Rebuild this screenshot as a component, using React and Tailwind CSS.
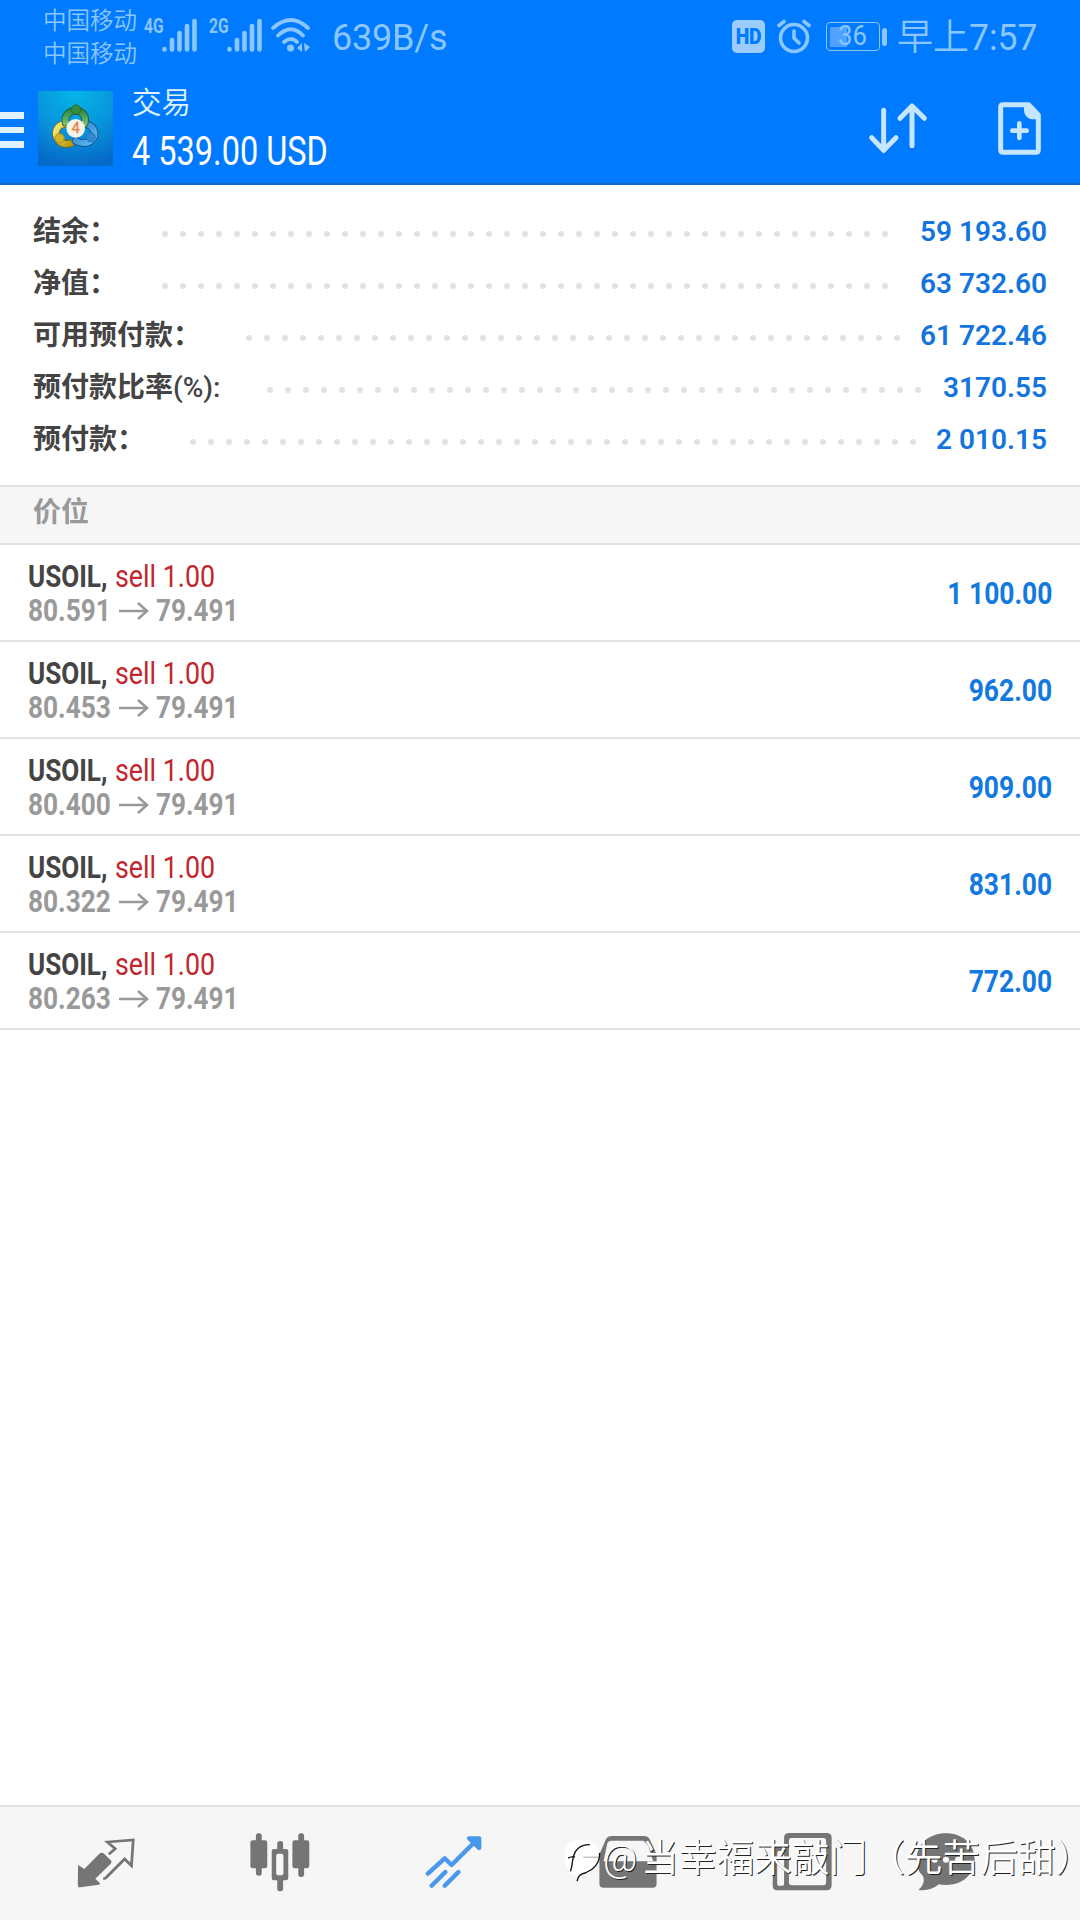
import React from "react";

const summary = [
  { label: "结余：", value: "59 193.60", dots: 41, gap: "pl-[162px]" },
  { label: "净值：", value: "63 732.60", dots: 41, gap: "pl-[162px]" },
  { label: "可用预付款：", value: "61 722.46", dots: 37, gap: "pl-[246px]" },
  { label: "预付款比率", suffix: "(%):", value: "3170.55", dots: 37, gap: "pl-[267px]" },
  { label: "预付款：", value: "2 010.15", dots: 41, gap: "pl-[190px]" },
];

const positions = [
  { open: "80.591", profit: "1 100.00" },
  { open: "80.453", profit: "962.00" },
  { open: "80.400", profit: "909.00" },
  { open: "80.322", profit: "831.00" },
  { open: "80.263", profit: "772.00" },
];

function Signal({ label }) {
  return (
    <div className="flex h-[34px] w-[54px] items-start">
      <span className="w-[18px] origin-left scale-x-[0.78] text-[20px] leading-[17px] font-bold">{label}</span>
      <svg className="h-[34px] w-[36px]" viewBox="0 0 36 34" stroke="currentColor" strokeWidth="4.6" strokeLinecap="round">
        <path d="M2.5 31v.5M10 22v9.5M17.5 15v16.5M25 8v23.5M32.5 3v28.5" />
      </svg>
    </div>
  );
}

function StatusBar() {
  return (
    <div className="flex h-[74px] items-start text-[#8cc6ff]">
      <div className="ml-[43px] w-[101px] pt-[5px] text-[23.5px] leading-[33px] font-[350]">
        <div>中国移动</div>
        <div>中国移动</div>
      </div>
      <div className="mt-[18px] flex">
        <Signal label="4G" />
        <div className="ml-[11px]">
          <Signal label="2G" />
        </div>
        <svg className="ml-[7px] h-[36px] w-[42px]" viewBox="0 0 42 36" fill="none" stroke="currentColor" strokeWidth="3.8" strokeLinecap="round">
          <path d="M3 10Q21-6 38 10M8 17.500Q21 5 33 17.500M14 24Q21 18 27 24" />
          <circle cx="20.500" cy="30" r="3.500" fill="currentColor" stroke="none" />
          <path d="M27 30l5-5v9zM34 25l6 4-5 5z" fill="currentColor" stroke="none" />
        </svg>
      </div>
      <div className="mt-[17px] ml-[20px] w-[114px] text-[36px] leading-[42px] tracking-[-0.2px]">639B/s</div>
      <div className="mt-[20px] ml-auto flex h-[33px] w-[33px] items-center justify-center rounded-[5px] bg-[#9bcbff] text-[22px] leading-none font-black tracking-[-0.5px] text-[#007aff]">
        <span className="scale-x-[0.88]">HD</span>
      </div>
      <svg className="mt-[19px] ml-[12px] h-[35px] w-[34px]" viewBox="0 0 34 35" fill="none" stroke="currentColor" strokeWidth="3.600" strokeLinecap="round">
        <circle cx="17" cy="19" r="13.500" />
        <path d="M2 6.500L7 2.500M32 6.500L27 2.500M17 12v7l5 5" />
      </svg>
      <div className="mt-[22px] ml-[15px] flex h-[29px] w-[54px] items-center rounded-[4px] border-[1.5px] border-current p-[3px]">
        <div className="h-[20px] w-[17px] bg-[#4fa2ff]" />
        <div className="-ml-[9px] text-[27px] leading-none">
          <span className="inline-block origin-left scale-x-[0.95]">36</span>
        </div>
      </div>
      <div className="mt-[28px] ml-[2px] h-[18px] w-[5px] rounded-sm bg-current" />
      <div className="mt-[17px] mr-[43px] ml-[10px] flex w-[140px] items-center leading-[42px] whitespace-nowrap">
        <span className="text-[36px] font-[350]">早上</span>
        <span className="origin-left scale-x-[0.960] text-[37px]">7:57</span>
      </div>
    </div>
  );
}

function AppLogo() {
  return (
    <svg className="h-[75px] w-[75px]" viewBox="25 33 225 225">
      <defs>
        <radialGradient id="tile" cx="0.500" cy="0" r="1">
          <stop offset="0" stopColor="#05b6e8" />
          <stop offset="0.550" stopColor="#0794dc" />
          <stop offset="1" stopColor="#0569c8" />
        </radialGradient>
        <linearGradient id="leaf" x2="0" y2="1">
          <stop stopColor="#2e8b47" />
          <stop offset="1" stopColor="#7cc070" />
        </linearGradient>
        <linearGradient id="gold" x2="1" y2="1">
          <stop stopColor="#f7ec7a" />
          <stop offset="1" stopColor="#b99a12" />
        </linearGradient>
        <linearGradient id="sea" x2="1" y2="1">
          <stop stopColor="#2a7cc9" />
          <stop offset="1" stopColor="#5fbdf0" />
        </linearGradient>
      </defs>
      <path fill="url(#tile)" d="M25 33h225v225H25z" />
      <path stroke="#40b8ee" strokeOpacity="0.200" d="M55 33v225M82 33v225M109 33v225M137 33v225M165 33v225M192 33v225M220 33v225M25 60h225M25 87h225M25 115h225M25 143h225M25 171h225M25 199h225M25 227h225" />
      <g fill="none" strokeLinecap="round">
        <path d="M106 132C80 134 72 160 85 178c8 14 22 16 38 12" stroke="#6f6d1c" strokeWidth="23" />
        <path d="M106 132C80 134 72 160 85 178c8 14 22 16 38 12" stroke="url(#gold)" strokeWidth="18" />
        <path d="M174 134c22 8 26 32 12 46-12 12-34 12-48 2" stroke="#174f8c" strokeWidth="23" />
        <path d="M174 134c22 8 26 32 12 46-12 12-34 12-48 2" stroke="url(#sea)" strokeWidth="18" />
        <path d="M108 128c-4-22 10-36 30-36s34 16 26 40" stroke="#1c5c3c" strokeWidth="23" />
        <path d="M108 128c-4-22 10-36 30-36s34 16 26 40" stroke="url(#leaf)" strokeWidth="18" />
      </g>
      <g strokeWidth="3">
        <circle cx="139" cy="89" r="14" fill="#378c3e" stroke="#216b40" />
        <circle cx="90" cy="175" r="14" fill="#d0b526" stroke="#a78e1c" />
        <circle cx="183" cy="172" r="14" fill="#3188d0" stroke="#2377ba" />
      </g>
      <circle cx="138" cy="145" r="28" fill="#f5f2e9" />
      <text x="138" y="160" textAnchor="middle" fontFamily="Roboto" fontSize="43" fill="#f28c47" stroke="#e47535">4</text>
    </svg>
  );
}

function Header() {
  return (
    <header className="h-[185px] border-b-2 border-[#1767c0] bg-[#007aff]">
      <StatusBar />
      <div className="flex h-[109px] items-start text-[#def3ff]">
        <div className="mt-[38px] flex w-6 flex-col gap-2">
          <div className="h-[6.500px] bg-current" />
          <div className="h-[6.500px] bg-current" />
          <div className="h-[6.500px] bg-current" />
        </div>
        <div className="mt-[17px] ml-[14px]">
          <AppLogo />
        </div>
        <div className="mt-[9px] ml-[19px] whitespace-nowrap">
          <div className="text-[29.500px] leading-[40px] font-[350]">交易</div>
          <div className="mt-[6px] origin-left scale-x-[0.812] text-[40px] leading-[46px] text-white">4 539.00 USD</div>
        </div>
        <svg className="mt-[26px] ml-auto h-[57px] w-[64px] text-[#c6e5ff]" viewBox="500 300 192 171" fill="none" stroke="currentColor" strokeWidth="15" strokeLinecap="round" strokeLinejoin="round">
          <path d="M553 331v120M517 413l36 38 37-38M638 437V318M602 355l36-37 37 37" />
        </svg>
        <svg className="mt-[26px] mr-[36px] ml-[66px] h-[57px] w-[48px] text-[#c6e5ff]" viewBox="888 300 144 171">
          <path fill="none" stroke="currentColor" strokeWidth="15" strokeLinejoin="round" d="M909 314h77l29 31v104q0 8-8 8h-97q-8 0-8-8V322q0-8 7-8z" />
          <path fill="currentColor" d="M972 312h17l28 29v17h-17c-17 0-28-13-28-29z" />
          <path stroke="currentColor" strokeWidth="14" strokeLinecap="round" d="M937 392h43M958 370v44" />
        </svg>
      </div>
    </header>
  );
}

function SummaryRow({ row }) {
  return (
    <div className="relative flex h-[52px] items-center justify-between pr-[33px]">
      <span className="absolute left-[33px] text-[28px] leading-[52px] font-bold whitespace-nowrap text-[#444]">
        {row.label}
        {row.suffix && <span className="font-medium">{row.suffix}</span>}
      </span>
      <div className={"flex gap-3 pt-[3px] " + row.gap}>
        {Array.from({ length: row.dots }, (_, i) => (
          <i key={i} className="h-[6px] w-[6px] rounded-full bg-[#e2e2e2]" />
        ))}
      </div>
      <span className="text-[28px] font-semibold text-[#1474de]">{row.value}</span>
    </div>
  );
}

function PositionRow({ row }) {
  return (
    <div className="flex h-[97px] items-center justify-between border-b-2 border-[#e2e2e2] pr-[28px] pl-[28px] text-[32px] leading-[34px] whitespace-nowrap">
      <div>
        <div className="flex">
          <span className="w-[87px]">
            <span className="inline-block origin-left scale-x-[0.815] font-bold text-[#444]">USOIL,</span>
          </span>
          <span className="inline-block origin-left scale-x-[0.838] text-[#c1272d]">sell 1.00</span>
        </div>
        <div className="flex font-bold text-[#999]">
          <span className="w-[91px]">
            <span className="inline-block origin-left scale-x-[0.820]">{row.open}</span>
          </span>
          <svg className="mt-[9px] h-[18px] w-[30px]" viewBox="0 0 30 18" fill="none" stroke="currentColor" strokeWidth="2.600">
            <path d="M0 9h28M19 1l9 8-9 8" />
          </svg>
          <span className="ml-[7px] inline-block origin-left scale-x-[0.815]">79.491</span>
        </div>
      </div>
      <span className="origin-right scale-x-[0.825] font-bold text-[#1279df]">{row.profit}</span>
    </div>
  );
}

function NavIcon({ viewBox, children, ...rest }) {
  return (
    <svg className="h-[60px] w-[62px]" viewBox={viewBox} preserveAspectRatio="none" {...rest}>
      {children}
    </svg>
  );
}

function BottomNav() {
  return (
    <nav className="relative h-[115px] border-t-2 border-[#e2e2e2] bg-[#f6f6f6] pt-[25px] pl-[19px] text-[#757575]">
      <div className="flex">
        <div className="flex w-[174px] justify-center">
          <NavIcon viewBox="217 125 180 180">
            <path fill="currentColor" d="M226 224l18 12 43-45q7-7 13-2l20 20q6 5 0 12l-44 44 13 13q3 4-3 5l-53 8q-8 1-8-6z" />
            <path fill="none" stroke="currentColor" strokeWidth="8" d="M315 192l19-17-23-20 75-6-5 77-20-20-52 54q-4 5-10 5" />
          </NavIcon>
        </div>
        <div className="flex w-[174px] justify-center">
          <NavIcon viewBox="722 125 180 180" fill="currentColor">
            <rect x="726" y="150" width="49" height="84" rx="7" />
            <rect x="742" y="129" width="17" height="127" rx="8" />
            <rect x="848" y="150" width="49" height="84" rx="7" />
            <rect x="865" y="129" width="17" height="131" rx="8" />
            <rect x="804" y="152" width="17" height="34" rx="8" />
            <rect x="804" y="258" width="17" height="45" rx="7" />
            <path fillRule="evenodd" d="M794 176h35q7 0 7 7v80q0 7-7 7h-35q-6 0-6-7v-80q0-7 6-7zm12 14q-5 0-5 7v52q0 6 5 6h11q5 0 5-6v-52q0-7-5-7z" />
          </NavIcon>
        </div>
        <div className="flex w-[174px] justify-center text-[#4a98ec]">
          <NavIcon viewBox="1229 125 180 180" fill="none" stroke="currentColor" strokeWidth="13" strokeLinecap="round" strokeLinejoin="round">
            <path d="M1243 250l49-46 20 20 75-77M1254 286l40-41M1292 286l40-41" />
            <path fill="currentColor" d="M1363 144h29v29z" />
          </NavIcon>
        </div>
        <div className="flex w-[174px] justify-center">
          <NavIcon viewBox="166 125 180 180">
            <path fill="currentColor" fillRule="evenodd" d="M210 137h92q12 0 17 10l17 38q3 6 3 15v81q0 11-11 11H185q-12 0-12-11v-81q0-9 3-15l16-38q5-10 18-10zm-4 14q-7 0-10 8l-11 54h144l-14-47-14-15z" />
          </NavIcon>
        </div>
        <div className="flex w-[174px] justify-center">
          <NavIcon viewBox="672 125 180 180">
            <path fill="currentColor" fillRule="evenodd" d="M724 128h110q14 0 14 14v143q0 15-14 15H692q-15 0-15-14V180q0-14 15-14h18v-24q0-14 14-14zm8 15q-8 0-8 9v124q0 9 8 9h92q8 0 8-9V152q0-9-8-9zm-38 39q-4 0-4 8v90q0 6 4 6h11q5 0 5-6v-98z" />
          </NavIcon>
        </div>
        <div className="flex w-[114px] justify-center">
          <NavIcon viewBox="1090 125 180 180">
            <path fill="currentColor" d="M1180 129c48 0 83 32 83 78 0 55-50 86-104 75-18 15-36 20-59 17 14-13 19-28 13-42-15-14-18-31-18-50 0-46 36-78 85-78z" />
            <g fill="#f6f6f6">
              <circle cx="1147" cy="208" r="9" />
              <circle cx="1180" cy="208" r="9" />
              <circle cx="1215" cy="208" r="9" />
            </g>
          </NavIcon>
        </div>
      </div>
      <div className="absolute top-[26px] left-[564px] flex h-[50px] items-center text-[37.700px] leading-[50px] font-[350] whitespace-nowrap text-white [text-shadow:1px_1px_0_#222]">
        <svg className="mt-[6px] h-[48px] w-[39px]" viewBox="70 142 113 145" preserveAspectRatio="none">
          <path fill="#fff" d="M72 200c-2-30 14-46 34-50 24 4 44-2 62 22 14 40-10 66-40 78l-24 10c-20-8-32-30-32-60z" />
          <path fill="none" stroke="#111" strokeWidth="4" d="M89 246c8-29 3-41 14-60 10-16 24-22 42-21M82 206q10-6 20-4M173 190c2 32-20 52-40 60-15 4-22 8-25 25" />
          <path stroke="#777" strokeWidth="2" d="M126 203h46" />
        </svg>
        <span className="w-[38px]">@</span>
        <span>当幸福来敲门（先苦后甜）</span>
      </div>
    </nav>
  );
}

export default function App() {
  return (
    <div className="flex h-[1920px] w-[1080px] flex-col overflow-hidden bg-white font-['Roboto','Noto_Sans_CJK_SC',sans-serif]">
      <Header />
      <section className="h-[302px] border-b-2 border-[#e2e2e2] pt-[21px]">
        {summary.map((row) => (
          <SummaryRow key={row.label} row={row} />
        ))}
      </section>
      <div className="h-[58px] border-b-2 border-[#e2e2e2] bg-[#f6f6f6] pl-[33px] text-[28px] leading-[52px] font-bold text-[#999]">价位</div>
      <main className="flex-1">
        {positions.map((row) => (
          <PositionRow key={row.open} row={row} />
        ))}
      </main>
      <BottomNav />
    </div>
  );
}
